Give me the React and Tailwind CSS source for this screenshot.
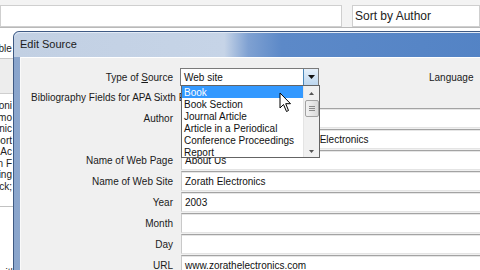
import React from "react";

const font = { fontFamily: '"Liberation Sans", Arial, sans-serif' };

function Field({ children, className = "" }) {
  return (
    <div className={"h-[20px] bg-white border-t border-t-[#a3a3a3] border-l border-l-[#c9c9c9] border-b border-b-[#e4e4e4] shadow-[inset_0_1px_0_#e6e6e6] flex items-center pl-[3px] text-[10px] text-[#111] whitespace-nowrap overflow-hidden " + className}>
      {children}
    </div>
  );
}

function Row({ label, children }) {
  return (
    <div className="flex items-center h-[20px]">
      <div className="w-[152px] text-right text-[10px] text-[#1a1a1a] whitespace-nowrap">{label}</div>
      <div className="ml-[8px] flex-1">{children}</div>
    </div>
  );
}

export default function App() {
  const leftLines = ["Electroni", "Sumo", "Electronic", "Report", "Ac", "Option F", "Setting", "Quick;"];
  return (
    <div className="relative w-[480px] h-[270px] overflow-hidden bg-[#ececec]" style={font}>
      {/* background window */}
      <div className="flex flex-col h-full">
        <div className="h-[31px] bg-[#f3f3f3] flex items-start pt-[5px] border-b border-b-[#b9b9b9]">
          <div className="w-[342px] h-[22px] bg-white border border-[#cfcfcf]" />
          <div className="ml-[10px] flex-1 h-[22px] bg-white border border-[#cfcfcf] flex items-center pl-[2px] text-[12px] text-[#222]">Sort by Author</div>
        </div>
        <div className="flex-1 bg-white text-[10px] text-[#222] leading-[11px]">
          <div className="h-[30px] flex items-end pb-[4px] -ml-[12px]">Table</div>
          <div className="h-[36px] bg-[#ededed] border-t border-t-[#c8c8c8] border-b border-b-[#cfcfcf]" />
          <div className="flex flex-col -ml-[4px] mt-[6px]">
            {leftLines.map((t, i) => (
              <div key={i} className="h-[11.5px] flex items-center justify-end w-[16px] whitespace-nowrap">{t}</div>
            ))}
          </div>
          <div className="mt-[14px] border-t border-t-[#c2c2c2] w-[13px]" />
          <div className="mt-[60px] w-[16px] flex justify-end">with</div>
        </div>
      </div>

      {/* dialog window */}
      <div className="absolute left-[13px] top-[31px] w-[480px] h-[250px] border border-[#3f5a84] rounded-t-[6px] bg-[linear-gradient(90deg,#8aa5cc_0%,#9fb6d9_40%,#6d93cb_55%,#5f8bc8_100%)] flex flex-col">
        {/* title bar */}
        <div className="h-[25px] flex items-center pl-[6px] text-[11px] text-[#1b1b1b] rounded-t-[6px] bg-[linear-gradient(90deg,#c2d0e3_0%,#c6d4e7_44%,#7fa1d2_49%,#5c89c8_56%,#5383c5_100%)] shadow-[inset_0_1px_0_#e3ebf6]">
          Edit Source
        </div>
        {/* body */}
        <div className="ml-[6px] flex-1 bg-[#f0f0f0] border-t border-t-white border-l border-l-[#fafafa] relative">
          <div className="flex flex-col">
            {/* type of source */}
            <div className="flex items-center h-[18px] mt-[10px]">
              <div className="w-[152px] text-right text-[10px] text-[#1a1a1a] whitespace-nowrap">Type of <span className="underline">S</span>ource</div>
              <div className="ml-[7px] w-[139px] h-[18px] bg-white border border-[#7a7a7a] flex items-center">
                <div className="flex-1 pl-[3px] text-[10px] text-[#111]">Web site</div>
                <div className="w-[15px] h-[16px] bg-[linear-gradient(180deg,#e6f0fa,#bcd6ee)] border-l border-[#4a86b8] flex items-center justify-center">
                  <svg width="7" height="4" viewBox="0 0 7 4"><path d="M0 0H7L3.5 4Z" fill="#111" /></svg>
                </div>
              </div>
              <div className="ml-[110px] text-[10px] text-[#1a1a1a]">Language</div>
            </div>
            {/* bibliography */}
            <div className="h-[14px] mt-[4px] pl-[10px] flex items-center text-[10px] text-[#1a1a1a] whitespace-nowrap">
              Bibliography Fields for APA Sixth Edition
            </div>
            <div className="mt-[4px] flex flex-col gap-[1px]">
              <Row label="Author"><Field /></Row>
              <Row label=""><Field><span className="pl-[103px]">Zorath Electronics</span></Field></Row>
              <Row label="Name of Web Page"><Field>About Us</Field></Row>
              <Row label="Name of Web Site"><Field>Zorath Electronics</Field></Row>
              <Row label="Year"><Field>2003</Field></Row>
              <Row label="Month"><Field /></Row>
              <Row label="Day"><Field /></Row>
              <Row label="URL"><Field>www.zorathelectronics.com</Field></Row>
            </div>
          </div>

          {/* dropdown list */}
          <div className="absolute left-[160px] top-[27px] w-[139px] h-[73px] bg-white border border-[#646464] flex text-[10px] text-[#111]">
            <div className="flex-1 flex flex-col">
              <div className="h-[12px] bg-[#3399ff] text-white pl-[2px] flex items-center">Book</div>
              {["Book Section", "Journal Article", "Article in a Periodical", "Conference Proceedings", "Report"].map((t) => (
                <div key={t} className="h-[12px] pl-[2px] flex items-center whitespace-nowrap">{t}</div>
              ))}
            </div>
            <div className="w-[16px] bg-[#f0f0f0] border-l border-l-[#e4e4e4] flex flex-col items-center">
              <div className="h-[14px] w-full flex items-center justify-center">
                <svg width="5" height="3" viewBox="0 0 5 3"><path d="M0 3H5L2.5 0Z" fill="#555" /></svg>
              </div>
              <div className="w-[14px] h-[17px] bg-[linear-gradient(90deg,#f2f2f2,#dadada)] border border-[#a2a2a2] rounded-[2px] flex flex-col items-center justify-center gap-[1px]">
                <div className="w-[6px] h-px bg-[#8a8a8a]" />
                <div className="w-[6px] h-px bg-[#8a8a8a]" />
                <div className="w-[6px] h-px bg-[#8a8a8a]" />
              </div>
              <div className="flex-1" />
              <div className="h-[12px] w-full flex items-center justify-center">
                <svg width="5" height="3" viewBox="0 0 5 3"><path d="M0 0H5L2.5 3Z" fill="#555" /></svg>
              </div>
            </div>
          </div>

          {/* mouse cursor */}
          <svg className="absolute left-[258px] top-[34px]" width="13" height="21" viewBox="0 0 13 21">
            <path d="M1 1L1 16L4.5 12.5L7.5 19.5L9.5 18.5L6.7 11.7L11.5 11.7Z" fill="white" stroke="black" strokeWidth="1" strokeLinejoin="round" />
          </svg>
        </div>
      </div>
    </div>
  );
}
